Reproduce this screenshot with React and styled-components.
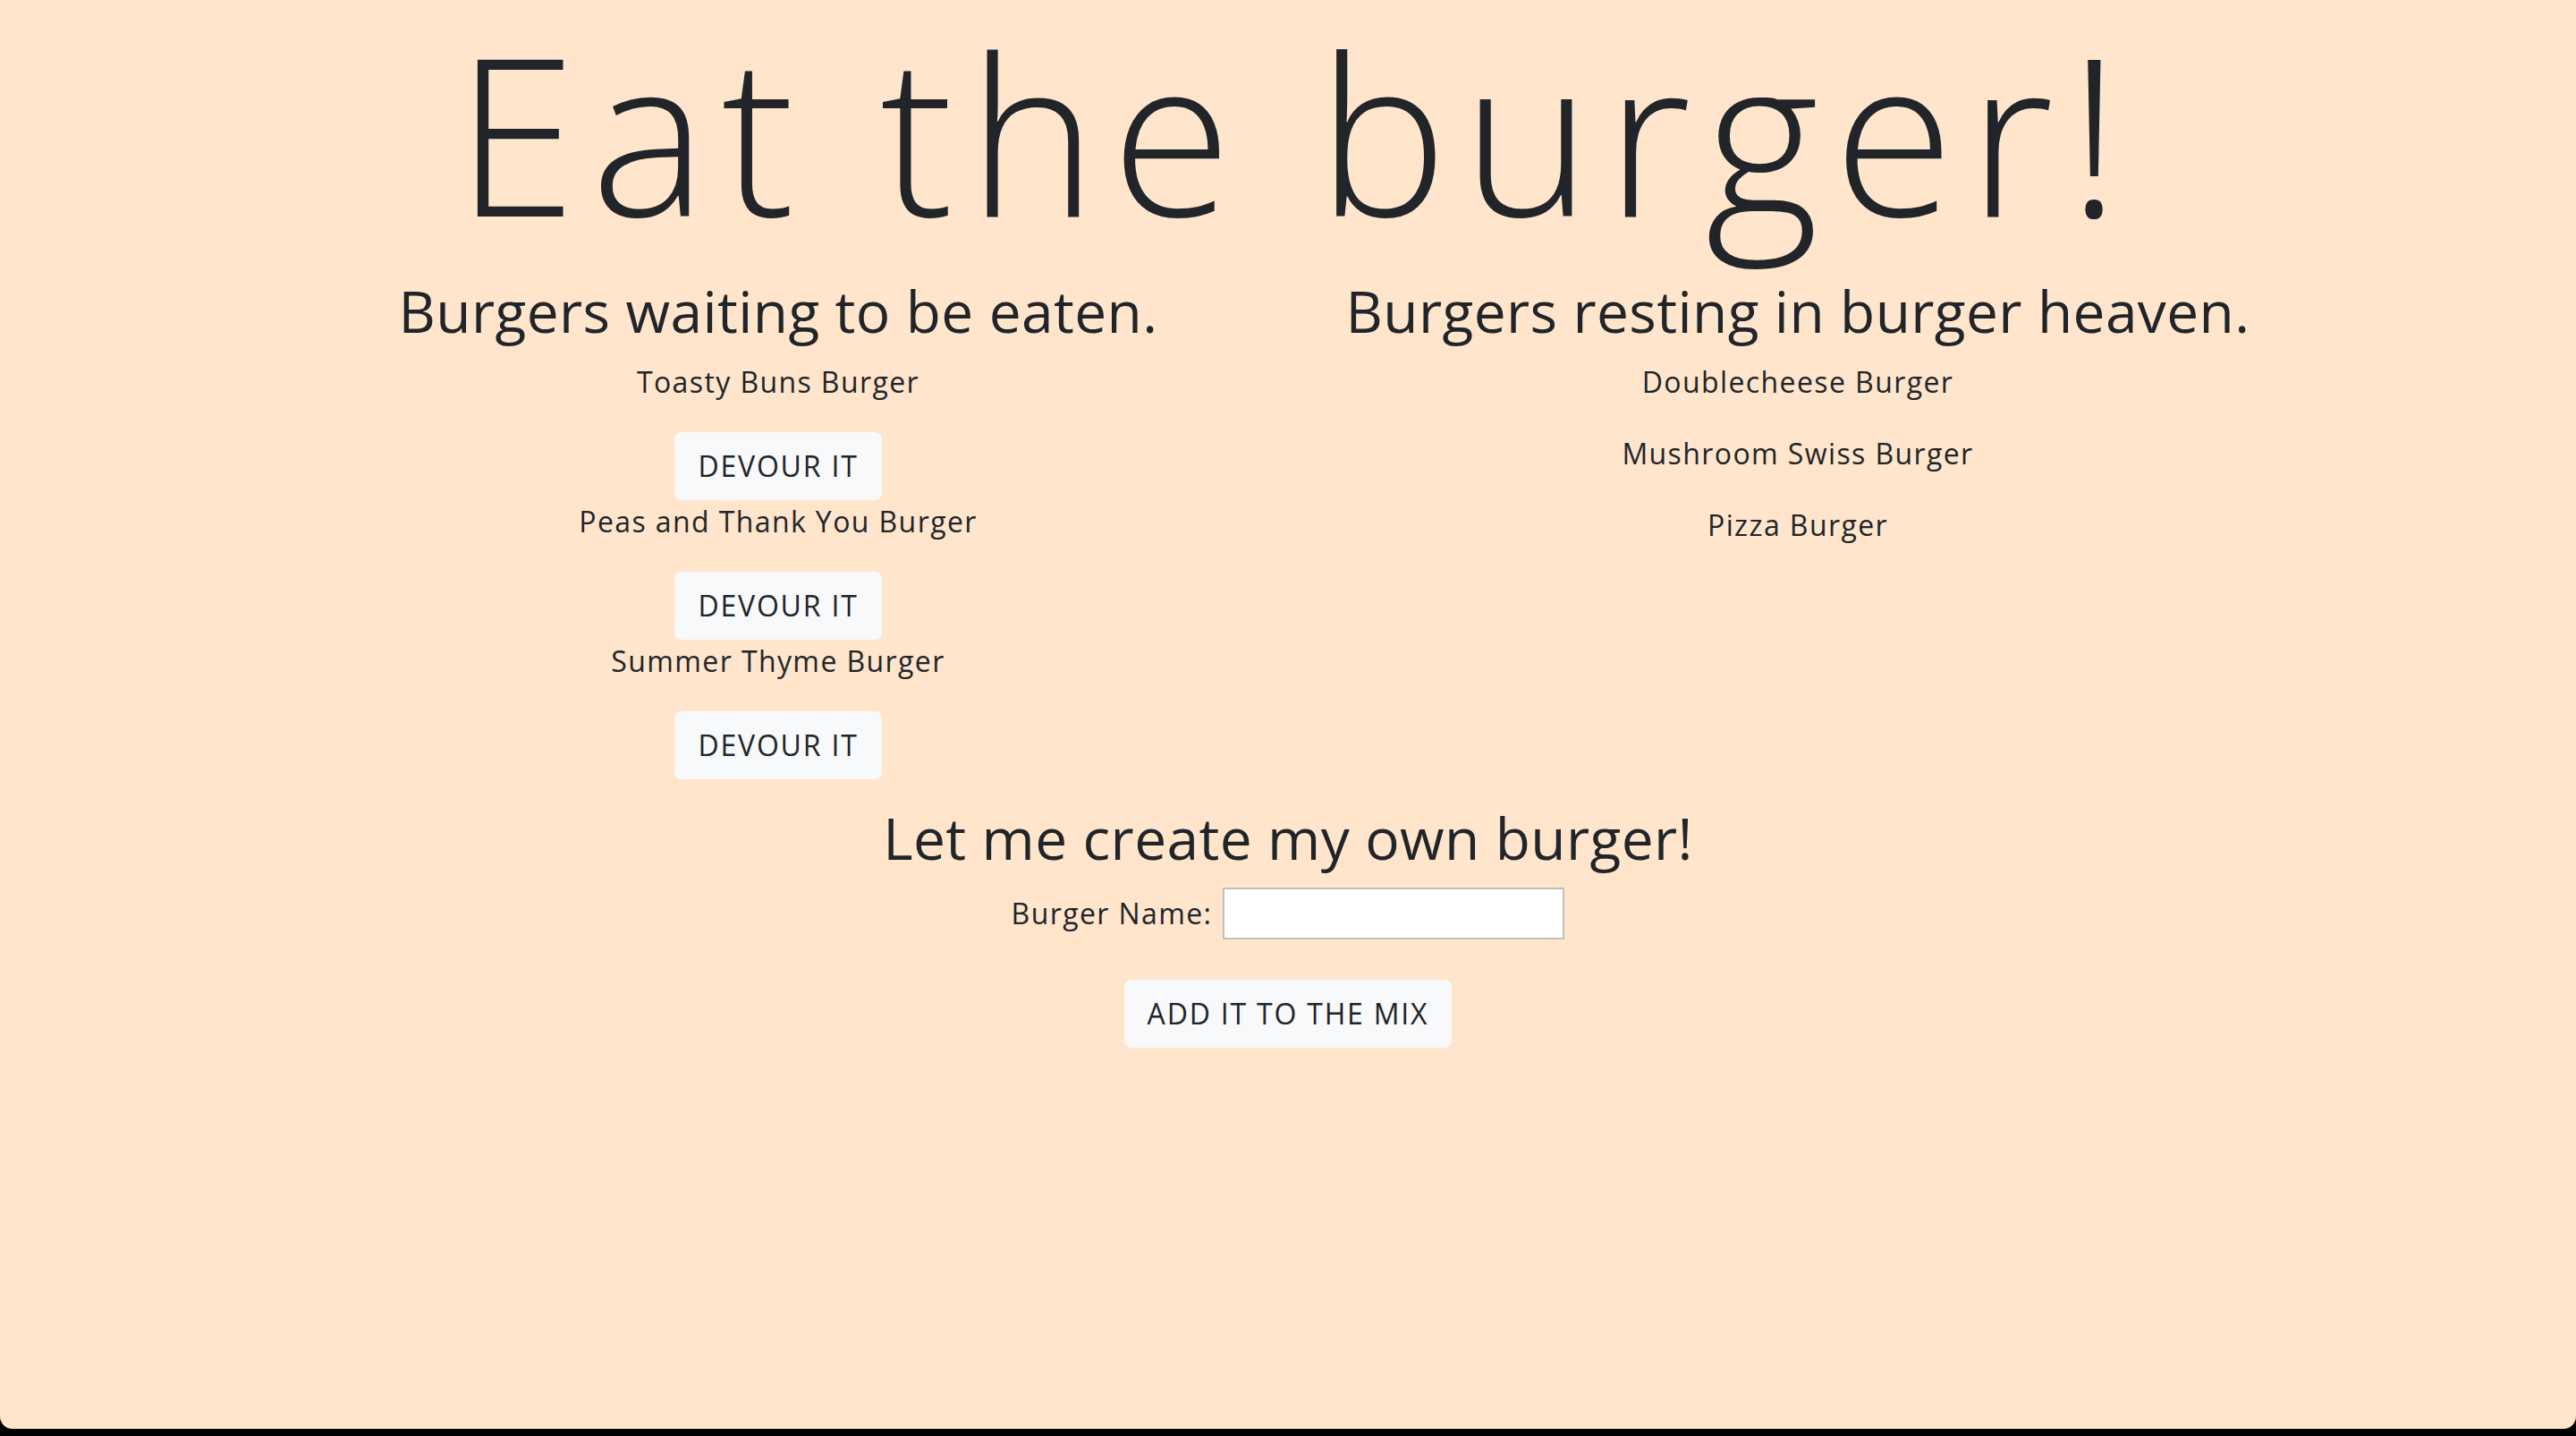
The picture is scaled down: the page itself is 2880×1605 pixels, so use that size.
import React from "react";
import styled, { createGlobalStyle } from "styled-components";

const GlobalStyle = createGlobalStyle`
  html {
    background: #000000;
  }
  body {
    margin: 0;
    font-family: "Open Sans", "Liberation Sans", sans-serif;
    color: #212529;
  }
`;

const Page = styled.div`
  min-height: calc(100vh - 8px);
  background: #ffe5cc;
  border-radius: 0 0 14px 14px;
  overflow: hidden;
`;

const Container = styled.div`
  width: 2280px;
  margin: 0 auto;
  text-align: center;
`;

const Title = styled.h1`
  margin: 0 0 16px;
  padding-left: 16px;
  font-size: 245px;
  font-weight: 300;
  line-height: 294px;
  letter-spacing: 16px;
`;

const Row = styled.div`
  display: grid;
  grid-template-columns: 1fr 1fr;
`;

const Column = styled.div`
  padding: 0 30px;
`;

const Heading = styled.h2`
  margin: 0 0 16px;
  font-size: 64px;
  font-weight: 500;
  line-height: 1.2;
  letter-spacing: 0.4px;
`;

const BurgerName = styled.p`
  margin: 0 0 32px;
  font-size: 32px;
  line-height: 1.5;
  letter-spacing: 1.4px;
`;

const Button = styled.button`
  display: inline-block;
  padding: 12px 24px;
  font-family: inherit;
  font-size: 32px;
  line-height: 1.5;
  letter-spacing: 1.8px;
  color: #212529;
  background: #f8f9fa;
  border: 2px solid #f8f9fa;
  border-radius: 8px;
  text-transform: uppercase;
  cursor: pointer;
`;

const Item = styled.div`
  display: flex;
  flex-direction: column;
  align-items: center;
`;

const CreateSection = styled.section`
  margin-top: ${(props) => props.offset}px;
`;

const FormRow = styled.div`
  display: flex;
  justify-content: center;
  align-items: center;
  gap: 12px;
  height: 58px;
  margin-bottom: 45px;
`;

const Label = styled.label`
  font-size: 32px;
  line-height: 1.5;
  letter-spacing: 1.4px;
`;

const NameInput = styled.input`
  box-sizing: border-box;
  width: 382px;
  height: 58px;
  padding: 2px 4px;
  font-family: inherit;
  font-size: 28px;
  background: #ffffff;
  border: 2px solid #bfbfbf;
`;

const waiting = ["Toasty Buns Burger", "Peas and Thank You Burger", "Summer Thyme Burger"];
const devoured = ["Doublecheese Burger", "Mushroom Swiss Burger", "Pizza Burger"];

const App = () => {
  return (
    <Page>
      <GlobalStyle />
      <Container>
        <Title>Eat the burger!</Title>
        <Row>
          <Column>
            <Heading>Burgers waiting to be eaten.</Heading>
            {waiting.map((name) => (
              <Item key={name}>
                <BurgerName>{name}</BurgerName>
                <Button>Devour it</Button>
              </Item>
            ))}
          </Column>
          <Column>
            <Heading>Burgers resting in burger heaven.</Heading>
            {devoured.map((name) => (
              <BurgerName key={name}>{name}</BurgerName>
            ))}
          </Column>
        </Row>
        <CreateSection offset={28}>
          <Heading>Let me create my own burger!</Heading>
          <FormRow>
            <Label htmlFor="burger-name">Burger Name:</Label>
            <NameInput id="burger-name" type="text" />
          </FormRow>
          <Button>Add it to the mix</Button>
        </CreateSection>
      </Container>
    </Page>
  );
};

export default App;
